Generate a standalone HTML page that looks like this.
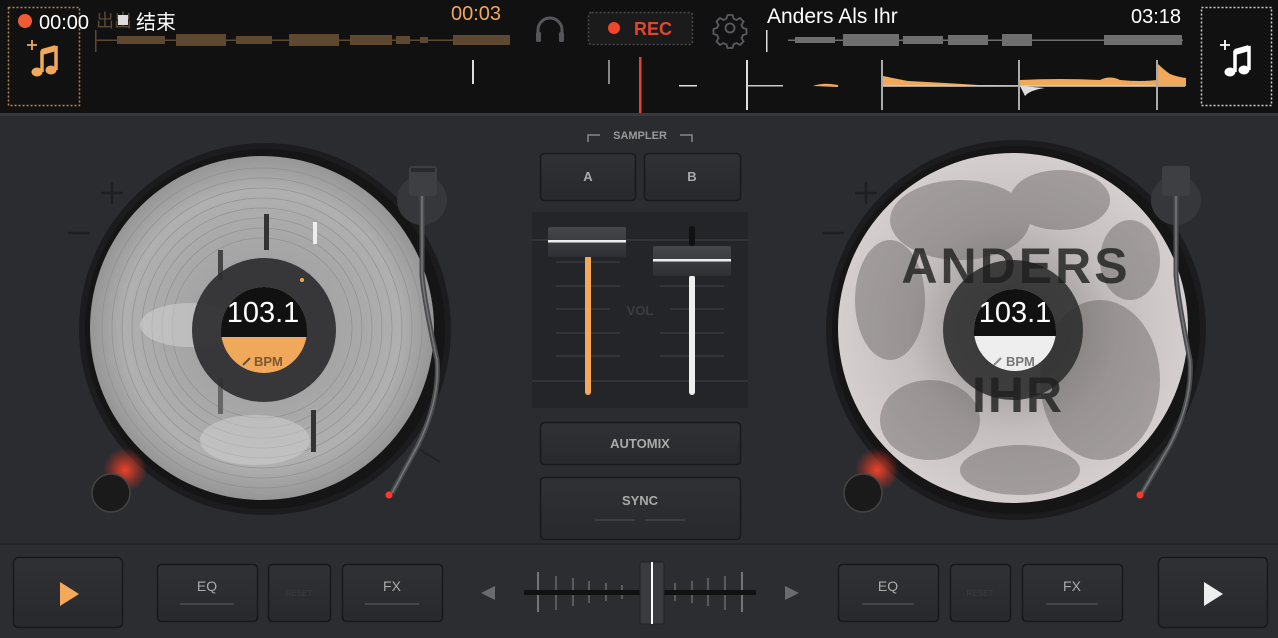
<!DOCTYPE html>
<html><head><meta charset="utf-8"><style>
html,body{margin:0;padding:0;background:#2b2c30;width:1278px;height:638px;overflow:hidden}
svg{display:block}
text{font-family:"Liberation Sans","Noto Sans CJK SC",sans-serif}
</style></head><body>
<svg width="1278" height="638" viewBox="0 0 1278 638" xmlns="http://www.w3.org/2000/svg">
<defs>
<radialGradient id="glow" cx="0.5" cy="0.5" r="0.5"><stop offset="0" stop-color="#ff4a2a" stop-opacity="0.9"/><stop offset="1" stop-color="#ff3020" stop-opacity="0"/></radialGradient>
<radialGradient id="recL" cx="0.5" cy="0.5" r="0.5"><stop offset="0.4" stop-color="#a4a4a4"/><stop offset="0.8" stop-color="#b0b0b0"/><stop offset="1" stop-color="#969696"/></radialGradient>
<radialGradient id="recR" cx="0.5" cy="0.5" r="0.5"><stop offset="0" stop-color="#8a8686"/><stop offset="0.6" stop-color="#c4bebe"/><stop offset="1" stop-color="#d4cece"/></radialGradient>
<linearGradient id="btn" x1="0" y1="0" x2="0" y2="1"><stop offset="0" stop-color="#303135"/><stop offset="1" stop-color="#28292c"/></linearGradient>
<linearGradient id="hdl" x1="0" y1="0" x2="0" y2="1"><stop offset="0" stop-color="#46474b"/><stop offset="1" stop-color="#2e2f33"/></linearGradient>
</defs>
<!-- top bar -->
<rect x="0" y="0" width="1278" height="113" fill="#111112"/>
<rect x="0" y="113" width="1278" height="3" fill="#38393d"/>
<rect x="8.5" y="7.5" width="71" height="98" fill="none" stroke="#b8834e" stroke-width="1.5" stroke-dasharray="2 2"/>
<g fill="#f0a85a" stroke="#f0a85a">
<path d="M32 40 v10 M27 45 h10" stroke-width="1.8" fill="none"/>
<path d="M42 72 V52 L56 48 V70" stroke-width="3.5" fill="none"/>
<path d="M42 52 L56 48" stroke-width="6" fill="none"/>
<ellipse cx="37" cy="72" rx="5.5" ry="4.5" stroke="none"/>
<ellipse cx="51" cy="70" rx="5.5" ry="4.5" stroke="none"/>
</g>
<circle cx="25" cy="21" r="7" fill="#f05a35"/>
<text x="39" y="29" fill="#fff" font-size="20">00:00</text>
<text x="96" y="27" fill="#5a4a35" font-size="18">出出</text>
<rect x="118" y="15" width="10" height="10" fill="#ddd"/>
<text x="136" y="29" fill="#fff" font-size="20">结束</text>
<text x="451" y="20" fill="#f0a85a" font-size="20">00:03</text>
<rect x="95" y="30" width="1.5" height="22" fill="#5a4a35"/>
<g fill="#5e4830">
<rect x="96" y="39.5" width="414" height="1.5"/>
<rect x="117" y="36" width="48" height="8"/><rect x="176" y="34" width="50" height="12"/><rect x="236" y="36" width="36" height="8"/><rect x="289" y="34" width="50" height="12"/><rect x="350" y="35" width="42" height="10"/><rect x="396" y="36" width="14" height="8"/><rect x="420" y="37" width="8" height="6"/><rect x="453" y="35" width="57" height="10"/>
</g>
<!-- headphones -->
<path d="M538 38 v-8 a12 12 0 0 1 24 0 v8" fill="none" stroke="#55565a" stroke-width="3"/>
<rect x="536" y="32" width="5" height="10" rx="1.5" fill="#55565a"/><rect x="559" y="32" width="5" height="10" rx="1.5" fill="#55565a"/>
<!-- REC -->
<rect x="588.5" y="12.5" width="104" height="32" rx="3" fill="#1b1b1c" stroke="#4a4b4e" stroke-width="1.5" stroke-dasharray="2 2"/>
<circle cx="614" cy="28" r="6" fill="#f0452b"/>
<text x="634" y="35" fill="#e0472f" font-size="18" font-weight="bold">REC</text>
<!-- gear -->
<g transform="translate(730,28)" fill="none" stroke="#5a5b5f" stroke-width="1.8">
<circle r="4.5"/>
<path d="M-2.5,-13 h5 l1,3.5 l3,1.5 l3.5,-2 l3.5,3.5 l-2,3.5 l1.5,3 l3.5,1 v5 l-3.5,1 l-1.5,3 l2,3.5 l-3.5,3.5 l-3.5,-2 l-3,1.5 l-1,3.5 h-5 l-1,-3.5 l-3,-1.5 l-3.5,2 l-3.5,-3.5 l2,-3.5 l-1.5,-3 l-3.5,-1 v-5 l3.5,-1 l1.5,-3 l-2,-3.5 l3.5,-3.5 l3.5,2 l3,-1.5 z"/>
</g>
<text x="767" y="23" fill="#fff" font-size="21">Anders Als Ihr</text>
<text x="1131" y="23" fill="#fff" font-size="20">03:18</text>
<rect x="766" y="30" width="1.5" height="22" fill="#ddd"/>
<g fill="#6e6e6e">
<rect x="788" y="39.5" width="395" height="1.5"/>
<rect x="795" y="37" width="40" height="6"/><rect x="843" y="34" width="56" height="12"/><rect x="903" y="36" width="40" height="8"/><rect x="948" y="35" width="40" height="10"/><rect x="1002" y="34" width="30" height="12"/><rect x="1104" y="35" width="78" height="10"/>
</g>
<rect x="1201.5" y="7.5" width="70" height="98" fill="none" stroke="#ccc" stroke-width="1.5" stroke-dasharray="2 2"/>
<g fill="#fff" stroke="#fff">
<path d="M1225 40 v10 M1220 45 h10" stroke-width="1.8" fill="none"/>
<path d="M1235 72 V52 L1249 48 V70" stroke-width="3.5" fill="none"/>
<path d="M1235 52 L1249 48" stroke-width="6" fill="none"/>
<ellipse cx="1230" cy="72" rx="5.5" ry="4.5" stroke="none"/>
<ellipse cx="1244" cy="70" rx="5.5" ry="4.5" stroke="none"/>
</g>
<!-- lower wave row -->
<rect x="472" y="60" width="2" height="24" fill="#ddd"/>
<rect x="608" y="60" width="2" height="24" fill="#888"/>
<rect x="639" y="57" width="2.5" height="56" fill="#e0452b"/>
<rect x="679" y="85" width="18" height="1.5" fill="#ddd"/>
<rect x="746" y="60" width="2" height="50" fill="#ddd"/>
<rect x="747" y="85" width="36" height="1.5" fill="#ccc"/>
<path d="M813 86 q10 -4 25 -1 v2 z" fill="#f0a85a"/>
<rect x="881" y="60" width="2" height="50" fill="#aaa"/>
<path d="M883 86 v-10 q10 2 25 5 q40 2 70 4 q80 0 136 0 z" fill="#f0a85a"/>
<rect x="883" y="85.5" width="135" height="1.2" fill="#ddd"/>
<rect x="1018" y="60" width="2" height="50" fill="#aaa"/>
<path d="M1020 86 v-6 q40 -2 80 0 q10 -5 20 0 q20 2 37 0 v6 z" fill="#f0a85a"/>
<path d="M1020 86 l5 10 q5 -6 20 -8 z" fill="#ddd"/>
<rect x="1020" y="85.5" width="165" height="1.2" fill="#ddd"/>
<rect x="1156" y="60" width="2" height="50" fill="#aaa"/>
<path d="M1158 86 v-22 q5 5 12 10 q8 3 16 4 v8 z" fill="#f0a85a"/>

<!-- LEFT TURNTABLE -->
<path d="M112 182 v22 M101 193 h22 M68 233 h22" stroke="#1e1f22" stroke-width="2.5"/>
<circle cx="265" cy="329" r="186" fill="#1c1c1e"/>
<circle cx="265" cy="329" r="180" fill="#151516"/>
<circle cx="262" cy="328" r="172" fill="url(#recL)"/>
<g fill="none" stroke="#8a8a8a" stroke-width="0.8" opacity="0.7">
<circle cx="262" cy="328" r="160"/><circle cx="262" cy="328" r="150"/><circle cx="262" cy="328" r="140"/><circle cx="262" cy="328" r="130"/><circle cx="262" cy="328" r="120"/><circle cx="262" cy="328" r="110"/><circle cx="262" cy="328" r="100"/><circle cx="262" cy="328" r="90"/>
</g>
<ellipse cx="190" cy="325" rx="50" ry="22" fill="#dcdcdc" opacity="0.45"/>
<ellipse cx="255" cy="440" rx="55" ry="25" fill="#d8d8d8" opacity="0.45"/>
<rect x="264" y="214" width="5" height="36" fill="#333"/>
<rect x="218" y="250" width="5" height="30" fill="#444"/>
<rect x="313" y="222" width="4" height="22" fill="#eee"/>
<rect x="218" y="378" width="5" height="36" fill="#666"/>
<rect x="311" y="410" width="5" height="42" fill="#333"/>
<circle cx="264" cy="330" r="72" fill="#2e2e30" opacity="0.92"/>
<circle cx="302" cy="280" r="2" fill="#f0a85a"/>
<circle cx="264" cy="330" r="43" fill="#f0a85a"/>
<path d="M221 330 a43 43 0 0 1 86 0 z" fill="#111"/>
<rect x="221" y="330" width="86" height="7" fill="#111"/>
<text x="263" y="322" fill="#fff" font-size="29" text-anchor="middle">103.1</text>
<path d="M243 365 l7 -7" stroke="#6a5030" stroke-width="2"/>
<text x="254" y="366" fill="#7a5830" font-size="13" font-weight="bold">BPM</text>
<circle cx="125" cy="470" r="22" fill="url(#glow)"/>
<circle cx="111" cy="493" r="19" fill="#1a1a1b" stroke="#444" stroke-width="1.5"/>
<!-- tonearm L -->
<circle cx="422" cy="200" r="25" fill="#36373b"/>
<rect x="409" y="166" width="28" height="30" rx="3" fill="#3e3f43"/>
<rect x="411" y="168" width="24" height="4" fill="#2a2a2c"/>
<path d="M422 196 V275 Q424 300 437 360 Q440 400 418 445 L392 493" fill="none" stroke="#4a4b4f" stroke-width="5"/>
<path d="M422 196 V275 Q424 300 437 360 Q440 400 418 445 L392 493" fill="none" stroke="#777" stroke-width="1.5"/>
<path d="M420 450 l20 12" stroke="#222" stroke-width="2"/>
<circle cx="389" cy="495" r="3.5" fill="#ff3a25"/>

<!-- RIGHT TURNTABLE -->
<path d="M866 182 v22 M855 193 h22 M822 233 h22" stroke="#1e1f22" stroke-width="2.5"/>
<circle cx="1016" cy="330" r="190" fill="#1c1c1e"/>
<circle cx="1016" cy="330" r="184" fill="#151516"/>
<circle cx="1013" cy="328" r="175" fill="url(#recR)"/>
<g fill="#4a4646" opacity="0.35">
<ellipse cx="960" cy="220" rx="70" ry="40"/><ellipse cx="1100" cy="380" rx="60" ry="80"/><ellipse cx="930" cy="420" rx="50" ry="40"/><ellipse cx="1060" cy="200" rx="50" ry="30"/>
<ellipse cx="890" cy="300" rx="35" ry="60"/><ellipse cx="1130" cy="260" rx="30" ry="40"/><ellipse cx="1020" cy="470" rx="60" ry="25"/>
</g>
<circle cx="1013" cy="330" r="70" fill="#2a2a2a" opacity="0.85"/>
<text x="1016" y="283" fill="#1e1e1e" font-size="50" font-weight="bold" text-anchor="middle" letter-spacing="3" opacity="0.8">ANDERS</text>
<text x="1018" y="412" fill="#1e1e1e" font-size="50" font-weight="bold" text-anchor="middle" letter-spacing="2" opacity="0.8">IHR</text>
<circle cx="1015" cy="330" r="41" fill="#eeeeee"/>
<path d="M974 330 a41 41 0 0 1 82 0 z" fill="#111"/>
<rect x="974" y="330" width="82" height="6" fill="#111"/>
<text x="1015" y="322" fill="#fff" font-size="29" text-anchor="middle">103.1</text>
<path d="M994 365 l7 -7" stroke="#888" stroke-width="2"/>
<text x="1006" y="366" fill="#777" font-size="13" font-weight="bold">BPM</text>
<circle cx="877" cy="470" r="22" fill="url(#glow)"/>
<circle cx="863" cy="493" r="19" fill="#1a1a1b" stroke="#444" stroke-width="1.5"/>
<circle cx="1176" cy="200" r="25" fill="#36373b"/>
<rect x="1162" y="166" width="28" height="30" rx="3" fill="#3e3f43"/>
<path d="M1176 196 V275 Q1178 300 1190 360 Q1193 400 1170 445 L1142 493" fill="none" stroke="#4a4b4f" stroke-width="5"/>
<path d="M1176 196 V275 Q1178 300 1190 360 Q1193 400 1170 445 L1142 493" fill="none" stroke="#777" stroke-width="1.5"/>
<circle cx="1140" cy="495" r="3.5" fill="#ff3a25"/>

<!-- CENTER -->
<path d="M588 142 v-7 h12 M680 135 h12 v7" fill="none" stroke="#888" stroke-width="1.5"/>
<text x="640" y="139" fill="#999" font-size="11" text-anchor="middle" font-weight="bold">SAMPLER</text>
<rect x="540.5" y="153.5" width="95" height="47" rx="4" fill="url(#btn)" stroke="#18191b" stroke-width="1.5"/>
<rect x="644.5" y="153.5" width="96" height="47" rx="4" fill="url(#btn)" stroke="#18191b" stroke-width="1.5"/>
<text x="588" y="181" fill="#aaa" font-size="13" text-anchor="middle" font-weight="bold">A</text>
<text x="692" y="181" fill="#aaa" font-size="13" text-anchor="middle" font-weight="bold">B</text>
<rect x="532" y="212" width="216" height="196" fill="#242528"/>
<g stroke="#38393c" stroke-width="1.5">
<line x1="532" y1="240" x2="748" y2="240"/><line x1="532" y1="381" x2="748" y2="381"/>
<line x1="556" y1="262" x2="620" y2="262"/><line x1="660" y1="262" x2="724" y2="262"/>
<line x1="556" y1="286" x2="620" y2="286"/><line x1="660" y1="286" x2="724" y2="286"/>
<line x1="556" y1="309" x2="610" y2="309"/><line x1="670" y1="309" x2="724" y2="309"/>
<line x1="556" y1="333" x2="620" y2="333"/><line x1="660" y1="333" x2="724" y2="333"/>
<line x1="556" y1="356" x2="620" y2="356"/><line x1="660" y1="356" x2="724" y2="356"/>
</g>
<text x="640" y="315" fill="#3c3d40" font-size="13" text-anchor="middle" font-weight="bold">VOL</text>
<rect x="585" y="255" width="6" height="140" rx="3" fill="#f5a85a"/>
<rect x="548" y="227" width="78" height="30" rx="2" fill="url(#hdl)"/>
<rect x="548" y="240" width="78" height="2.5" fill="#eee"/>
<rect x="689" y="226" width="6" height="20" rx="3" fill="#111"/>
<rect x="689" y="275" width="6" height="120" rx="3" fill="#eee"/>
<rect x="653" y="246" width="78" height="30" rx="2" fill="url(#hdl)"/>
<rect x="653" y="259" width="78" height="2.5" fill="#eee"/>
<rect x="540.5" y="422.5" width="200" height="42" rx="4" fill="url(#btn)" stroke="#18191b" stroke-width="1.5"/>
<text x="640" y="448" fill="#aaa" font-size="13" text-anchor="middle" font-weight="bold">AUTOMIX</text>
<rect x="540.5" y="477.5" width="200" height="62" rx="4" fill="url(#btn)" stroke="#18191b" stroke-width="1.5"/>
<text x="640" y="505" fill="#aaa" font-size="13" text-anchor="middle" font-weight="bold">SYNC</text>
<rect x="595" y="519" width="40" height="2" fill="#3c3d40"/><rect x="645" y="519" width="40" height="2" fill="#3c3d40"/>

<!-- BOTTOM -->
<rect x="0" y="543" width="1278" height="95" fill="#2c2d31"/>
<rect x="0" y="543" width="1278" height="2" fill="#242528"/>
<rect x="13.5" y="557.5" width="109" height="70" rx="5" fill="url(#btn)" stroke="#17181a" stroke-width="1.5"/>
<path d="M60 582 L79 594 L60 606 z" fill="#f5a85a"/>
<rect x="157.5" y="564.5" width="100" height="57" rx="4" fill="url(#btn)" stroke="#17181a" stroke-width="1.5"/>
<text x="207" y="591" fill="#aaa" font-size="14" text-anchor="middle">EQ</text>
<rect x="180" y="603" width="54" height="2" fill="#45464a"/>
<rect x="268.5" y="564.5" width="62" height="57" rx="4" fill="url(#btn)" stroke="#17181a" stroke-width="1.5"/>
<text x="299" y="596" fill="#3a3b3e" font-size="8" text-anchor="middle">RESET</text>
<rect x="342.5" y="564.5" width="100" height="57" rx="4" fill="url(#btn)" stroke="#17181a" stroke-width="1.5"/>
<text x="392" y="591" fill="#aaa" font-size="14" text-anchor="middle">FX</text>
<rect x="365" y="603" width="54" height="2" fill="#45464a"/>
<path d="M495 586 L481 593 L495 600 z" fill="#6a6b6e"/>
<path d="M785 586 L799 593 L785 600 z" fill="#6a6b6e"/>
<g stroke="#888" stroke-width="1">
<line x1="538" y1="572" x2="538" y2="612" stroke="#bbb"/><line x1="556" y1="576" x2="556" y2="610"/><line x1="573" y1="578" x2="573" y2="606"/><line x1="589" y1="581" x2="589" y2="603"/><line x1="606" y1="583" x2="606" y2="601"/><line x1="622" y1="585" x2="622" y2="599"/>
<line x1="658" y1="585" x2="658" y2="599"/><line x1="675" y1="583" x2="675" y2="601"/><line x1="692" y1="581" x2="692" y2="603"/><line x1="708" y1="578" x2="708" y2="606"/><line x1="725" y1="576" x2="725" y2="610"/><line x1="742" y1="572" x2="742" y2="612" stroke="#bbb"/>
</g>
<rect x="524" y="590" width="232" height="5" fill="#111"/>
<rect x="640" y="562" width="24" height="62" rx="2" fill="#3a3b3f" stroke="#222" stroke-width="1"/>
<rect x="651" y="562" width="2" height="62" fill="#fff"/>
<rect x="838.5" y="564.5" width="100" height="57" rx="4" fill="url(#btn)" stroke="#17181a" stroke-width="1.5"/>
<text x="888" y="591" fill="#aaa" font-size="14" text-anchor="middle">EQ</text>
<rect x="862" y="603" width="52" height="2" fill="#45464a"/>
<rect x="950.5" y="564.5" width="60" height="57" rx="4" fill="url(#btn)" stroke="#17181a" stroke-width="1.5"/>
<text x="980" y="596" fill="#3a3b3e" font-size="8" text-anchor="middle">RESET</text>
<rect x="1022.5" y="564.5" width="100" height="57" rx="4" fill="url(#btn)" stroke="#17181a" stroke-width="1.5"/>
<text x="1072" y="591" fill="#aaa" font-size="14" text-anchor="middle">FX</text>
<rect x="1046" y="603" width="52" height="2" fill="#45464a"/>
<rect x="1158.5" y="557.5" width="109" height="70" rx="5" fill="url(#btn)" stroke="#17181a" stroke-width="1.5"/>
<path d="M1204 582 L1223 594 L1204 606 z" fill="#eee"/>
</svg>
</body></html>
